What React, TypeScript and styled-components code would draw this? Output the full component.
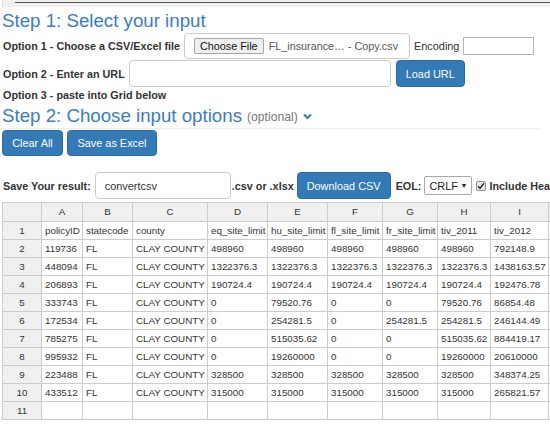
import styled, { createGlobalStyle } from 'styled-components'

const GlobalStyle = createGlobalStyle`
  body {
    margin: 0;
    background: #fff;
    font-family: "Liberation Sans", Arial, sans-serif;
    color: #333;
    overflow: hidden;
  }
`

const Page = styled.div`
  width: 550px;
  height: 425px;
  overflow: hidden;
  padding-left: 2px;
  box-sizing: border-box;
`

// bottom of the panel above, scrolled off the top
const PrevPanel = styled.div`
  height: 7px;
  background: #f0f0f0;
  border-left: 1px solid #ddd;
  box-sizing: border-box;
  padding: 2px 0 0 12px;
`

const PanelRule = styled.div`
  height: 1px;
  background: #555;
`

const StepTitle = styled.h3<{ $top?: number }>`
  margin: ${p => p.$top ?? 1}px 0 0;
  height: 25px;
  line-height: 25px;
  font-size: 18.7px;
  font-weight: normal;
  color: #3a7cbf;
  white-space: nowrap;
  display: flex;
  align-items: center;
`

const Optional = styled.small`
  font-size: 12.2px;
  color: #777;
  margin: 3px 0 0 5px;
`

const Chevron = styled.svg`
  width: 9px;
  height: 7px;
  margin: 2px 0 0 5px;
`

const Divider = styled.div`
  width: 539px;
  height: 1px;
  margin: 0 0 0 -2px;
  background: #eee;
`

const Row = styled.div<{ $h: number; $top?: number }>`
  display: flex;
  align-items: center;
  gap: 4px;
  height: ${p => p.$h}px;
  margin-top: ${p => p.$top ?? 0}px;
  white-space: nowrap;

  & > * {
    flex-shrink: 0;
  }
`

const Label = styled.span`
  font-size: 10.8px;
  font-weight: bold;
  color: #333;
  padding-left: 1px;
`

const PlainLabel = styled.span`
  font-size: 10.9px;
  color: #333;
`

const FileBox = styled.div`
  width: 226px;
  height: 26px;
  box-sizing: border-box;
  border: 1px solid #ccc;
  border-radius: 4px;
  display: flex;
  align-items: center;
  gap: 5px;
  padding-left: 9px;
  overflow: hidden;
`

const ChooseButton = styled.span`
  height: 16px;
  line-height: 14px;
  box-sizing: border-box;
  padding: 0 5px;
  font-size: 10.8px;
  color: #111;
  background: #efefef;
  border: 1px solid #a6a6a6;
  border-radius: 2px;
`

const FileName = styled.span`
  font-size: 10.8px;
  color: #555;
`

const TextInput = styled.div<{ $w: number; $h: number; $plain?: boolean }>`
  width: ${p => p.$w}px;
  height: ${p => p.$h}px;
  box-sizing: border-box;
  border: 1px solid ${p => (p.$plain ? '#b5b5b5' : '#ccc')};
  border-radius: ${p => (p.$plain ? 0 : 4)}px;
  padding-left: 9px;
  display: flex;
  align-items: center;
  font-size: 10.9px;
  color: #333;
  background: #fff;
`

const Button = styled.span<{ $w: number; $h?: number }>`
  width: ${p => p.$w}px;
  height: ${p => p.$h ?? 26}px;
  box-sizing: border-box;
  display: inline-flex;
  align-items: center;
  justify-content: center;
  background: #337ab7;
  border: 1px solid #2e6da4;
  border-radius: 4px;
  color: #fff;
  font-size: 10.9px;
`

const Select = styled.div`
  width: 48px;
  height: 19px;
  box-sizing: border-box;
  border: 1px solid #a9a9a9;
  border-radius: 2px;
  display: flex;
  align-items: center;
  justify-content: space-between;
  padding: 0 4px 0 4px;
  font-size: 10.9px;
  color: #222;
  margin-left: -1px;
`

const Caret = styled.span`
  font-size: 7px;
`

const Check = styled.span`
  width: 10px;
  height: 10px;
  box-sizing: border-box;
  border: 1px solid #8f8f8f;
  border-radius: 2px;
  background: #e9e9e9;
  display: inline-flex;
  align-items: center;
  justify-content: center;
`

const Sheet = styled.div`
  margin-top: 3px;
  border-top: 1px solid #ccc;
  border-left: 1px solid #ccc;
  width: 600px;
`

const SheetRow = styled.div`
  display: grid;
  grid-template-columns: 39px 41px 50px 75px 60px 60px 55px 55px 53px 58px 54px;
`

const Cell = styled.div<{ $head?: boolean; $h?: number }>`
  height: ${p => p.$h ?? 18}px;
  line-height: ${p => (p.$h ?? 18) - 1}px;
  box-sizing: border-box;
  border-right: 1px solid #ccc;
  border-bottom: 1px solid #ccc;
  background: ${p => (p.$head ? '#f0f0f0' : '#fff')};
  text-align: ${p => (p.$head ? 'center' : 'left')};
  padding: 0 3px;
  font-size: 9.8px;
  color: #333;
  white-space: nowrap;
  overflow: hidden;
`

const letters = ['A', 'B', 'C', 'D', 'E', 'F', 'G', 'H', 'I', '']

const data: string[][] = [
  ['policyID', 'statecode', 'county', 'eq_site_limit', 'hu_site_limit', 'fl_site_limit', 'fr_site_limit', 'tiv_2011', 'tiv_2012', ''],
  ['119736', 'FL', 'CLAY COUNTY', '498960', '498960', '498960', '498960', '498960', '792148.9', ''],
  ['448094', 'FL', 'CLAY COUNTY', '1322376.3', '1322376.3', '1322376.3', '1322376.3', '1322376.3', '1438163.57', ''],
  ['206893', 'FL', 'CLAY COUNTY', '190724.4', '190724.4', '190724.4', '190724.4', '190724.4', '192476.78', ''],
  ['333743', 'FL', 'CLAY COUNTY', '0', '79520.76', '0', '0', '79520.76', '86854.48', ''],
  ['172534', 'FL', 'CLAY COUNTY', '0', '254281.5', '0', '254281.5', '254281.5', '246144.49', ''],
  ['785275', 'FL', 'CLAY COUNTY', '0', '515035.62', '0', '0', '515035.62', '884419.17', ''],
  ['995932', 'FL', 'CLAY COUNTY', '0', '19260000', '0', '0', '19260000', '20610000', ''],
  ['223488', 'FL', 'CLAY COUNTY', '328500', '328500', '328500', '328500', '328500', '348374.25', ''],
  ['433512', 'FL', 'CLAY COUNTY', '315000', '315000', '315000', '315000', '315000', '265821.57', ''],
  ['', '', '', '', '', '', '', '', '', ''],
]

export default function App() {
  return (
    <Page>
      <GlobalStyle />
      <PrevPanel>
        <PanelRule />
      </PrevPanel>

      <StepTitle>Step 1: Select your input</StepTitle>
      <Row $h={26}>
        <Label>Option 1 - Choose a CSV/Excel file</Label>
        <FileBox>
          <ChooseButton>Choose File</ChooseButton>
          <FileName>FL_insurance… - Copy.csv</FileName>
        </FileBox>
        <PlainLabel>Encoding</PlainLabel>
        <TextInput $w={71} $h={18} $plain />
      </Row>
      <Row $h={27} $top={1}>
        <Label>Option 2 - Enter an URL</Label>
        <TextInput $w={262} $h={27} />
        <Button $w={69} $h={27} style={{ marginLeft: 1 }}>Load URL</Button>
      </Row>
      <Row $h={14} $top={1}>
        <Label>Option 3 - paste into Grid below</Label>
      </Row>

      <StepTitle $top={1}>
        Step 2: Choose input options
        <Optional>(optional)</Optional>
        <Chevron viewBox="0 0 9 7">
          <polyline points="1,1.5 4.5,5 8,1.5" fill="none" stroke="#3a7cbf" strokeWidth="2.2" />
        </Chevron>
      </StepTitle>
      <Divider />
      <Row $h={26} $top={1}>
        <Button $w={61}>Clear All</Button>
        <Button $w={90}>Save as Excel</Button>
      </Row>

      <Row $h={27} $top={16}>
        <Label>Save Your result:</Label>
        <TextInput $w={136} $h={27}>convertcsv</TextInput>
        <Label style={{ marginLeft: -3, paddingLeft: 0 }}>.csv or .xlsx</Label>
        <Button $w={94} $h={27} style={{ marginLeft: -1 }}>Download CSV</Button>
        <Label>EOL:</Label>
        <Select>
          CRLF<Caret>▼</Caret>
        </Select>
        <Check>
          <svg width="8" height="8" viewBox="0 0 8 8">
            <polyline points="1,4.2 3,6.3 7,1.2" fill="none" stroke="#333" strokeWidth="1.6" />
          </svg>
        </Check>
        <Label style={{ paddingLeft: 0, marginLeft: -1 }}>Include Headers</Label>
      </Row>

      <Sheet>
        <SheetRow>
          <Cell $head $h={19} />
          {letters.map((l, i) => (
            <Cell $head $h={19} key={i}>{l}</Cell>
          ))}
        </SheetRow>
        {data.map((row, i) => (
          <SheetRow key={i}>
            <Cell $head>{i + 1}</Cell>
            {row.map((v, j) => (
              <Cell key={j}>{v}</Cell>
            ))}
          </SheetRow>
        ))}
      </Sheet>
    </Page>
  )
}
